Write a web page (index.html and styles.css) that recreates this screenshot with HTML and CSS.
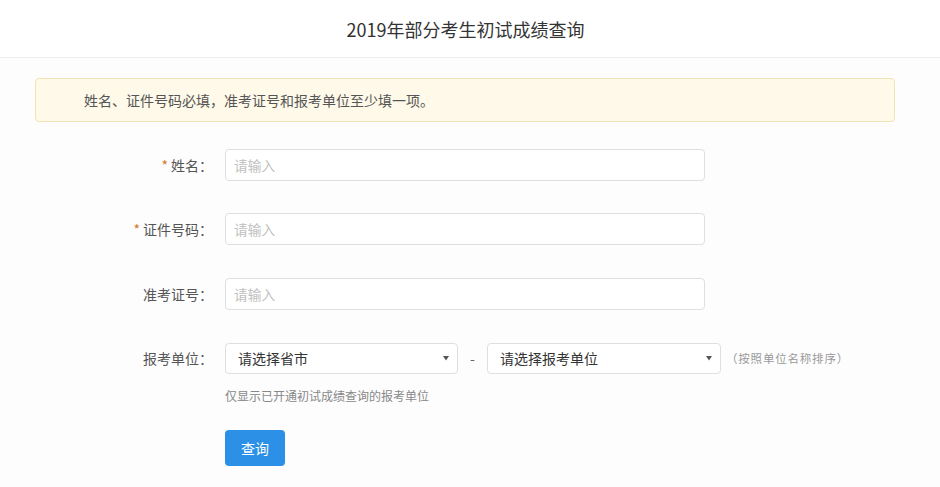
FILE: index.html
```html
<!DOCTYPE html>
<html lang="zh">
<head>
<meta charset="utf-8">
<link rel="stylesheet" href="styles.css">
</head>
<body>
<header class="header">
  <h1 class="title">2019年部分考生初试成绩查询</h1>
</header>
<main class="main">
  <div class="alert">姓名、证件号码必填，准考证号和报考单位至少填一项。</div>
  <form class="form">
    <div class="row">
      <label class="label"><span class="req">*</span>姓名：</label>
      <input class="input" type="text" placeholder="请输入">
    </div>
    <div class="row">
      <label class="label"><span class="req">*</span>证件号码：</label>
      <input class="input" type="text" placeholder="请输入">
    </div>
    <div class="row">
      <label class="label">准考证号：</label>
      <input class="input" type="text" placeholder="请输入">
    </div>
    <div class="row">
      <label class="label">报考单位：</label>
      <div class="selects">
        <div class="select sel1"><span>请选择省市</span><svg class="arrow" width="6" height="6" viewBox="0 0 6 6"><path d="M0 1h6L3 5.5z" fill="#555"/></svg></div>
        <span class="dash">-</span>
        <div class="select sel2"><span>请选择报考单位</span><svg class="arrow" width="6" height="6" viewBox="0 0 6 6"><path d="M0 1h6L3 5.5z" fill="#555"/></svg></div>
        <span class="hint">（按照单位名称排序）</span>
      </div>
    </div>
    <div class="note">仅显示已开通初试成绩查询的报考单位</div>
    <div class="actions">
      <button type="button" class="btn">查询</button>
    </div>
  </form>
</main>
</body>
</html>
```
FILE: styles.css
```css
* { box-sizing: border-box; }
html, body {
  margin: 0;
  padding: 0;
  background: #fdfdfe;
  font-family: "Noto Sans CJK SC", "Noto Sans", sans-serif;
  color: #333;
}
.header {
  height: 58px;
  background: #fff;
  border-bottom: 1px solid #ececec;
  display: flex;
  align-items: center;
  justify-content: center;
}
.title {
  margin: 0;
  font-size: 18px;
  font-weight: normal;
  color: #333;
  padding-right: 9px;
}
.main {
  padding: 20px 45px 0 35px;
}
.alert {
  height: 44px;
  background: #fef9e9;
  border: 1px solid #f3e2b3;
  border-radius: 4px;
  padding-left: 48px;
  display: flex;
  align-items: center;
  font-size: 14px;
  color: #555;
}
.form {
  padding-top: 27px;
}
.row {
  display: flex;
  align-items: center;
  height: 32px;
  margin-bottom: 32px;
}
.row:nth-child(2) { margin-bottom: 33px; }
.label {
  width: 178px;
  text-align: right;
  font-size: 14px;
  color: #555;
  margin-right: 12px;
}
.req {
  color: #cf7a2e;
  margin-right: 3px;
}
.input {
  width: 480px;
  height: 32px;
  border: 1px solid #dfdfdf;
  border-radius: 4px;
  background: #fff;
  padding: 0 8px;
  font-family: inherit;
  font-size: 13.7px;
  color: #333;
  outline: none;
}
.input::placeholder { color: #c0c0c0; }
.selects {
  display: flex;
  align-items: center;
}
.select {
  height: 31px;
  border: 1px solid #dfdfdf;
  border-radius: 4px;
  background: #fff;
  display: flex;
  align-items: center;
  justify-content: space-between;
  padding: 0 8px 0 12px;
  font-size: 14px;
  color: #333;
}
.sel1 { width: 233px; }
.sel2 { width: 234px; }
.arrow {
  display: block;
}
.dash {
  width: 29px;
  text-align: center;
  font-size: 14px;
  color: #666;
}
.hint {
  margin-left: 5px;
  font-size: 11.5px;
  letter-spacing: 0.8px;
  color: #999;
}
.row:nth-child(4) { margin-bottom: 13px; }
.note {
  margin-left: 190px;
  font-size: 12px;
  color: #888;
  height: 18px;
  line-height: 18px;
}
.actions {
  margin-left: 190px;
  margin-top: 25px;
}
.btn {
  width: 60px;
  height: 36px;
  background: #2b90e6;
  border: none;
  border-radius: 4px;
  color: #fff;
  font-family: inherit;
  font-size: 14px;
  padding: 0;
}
```
